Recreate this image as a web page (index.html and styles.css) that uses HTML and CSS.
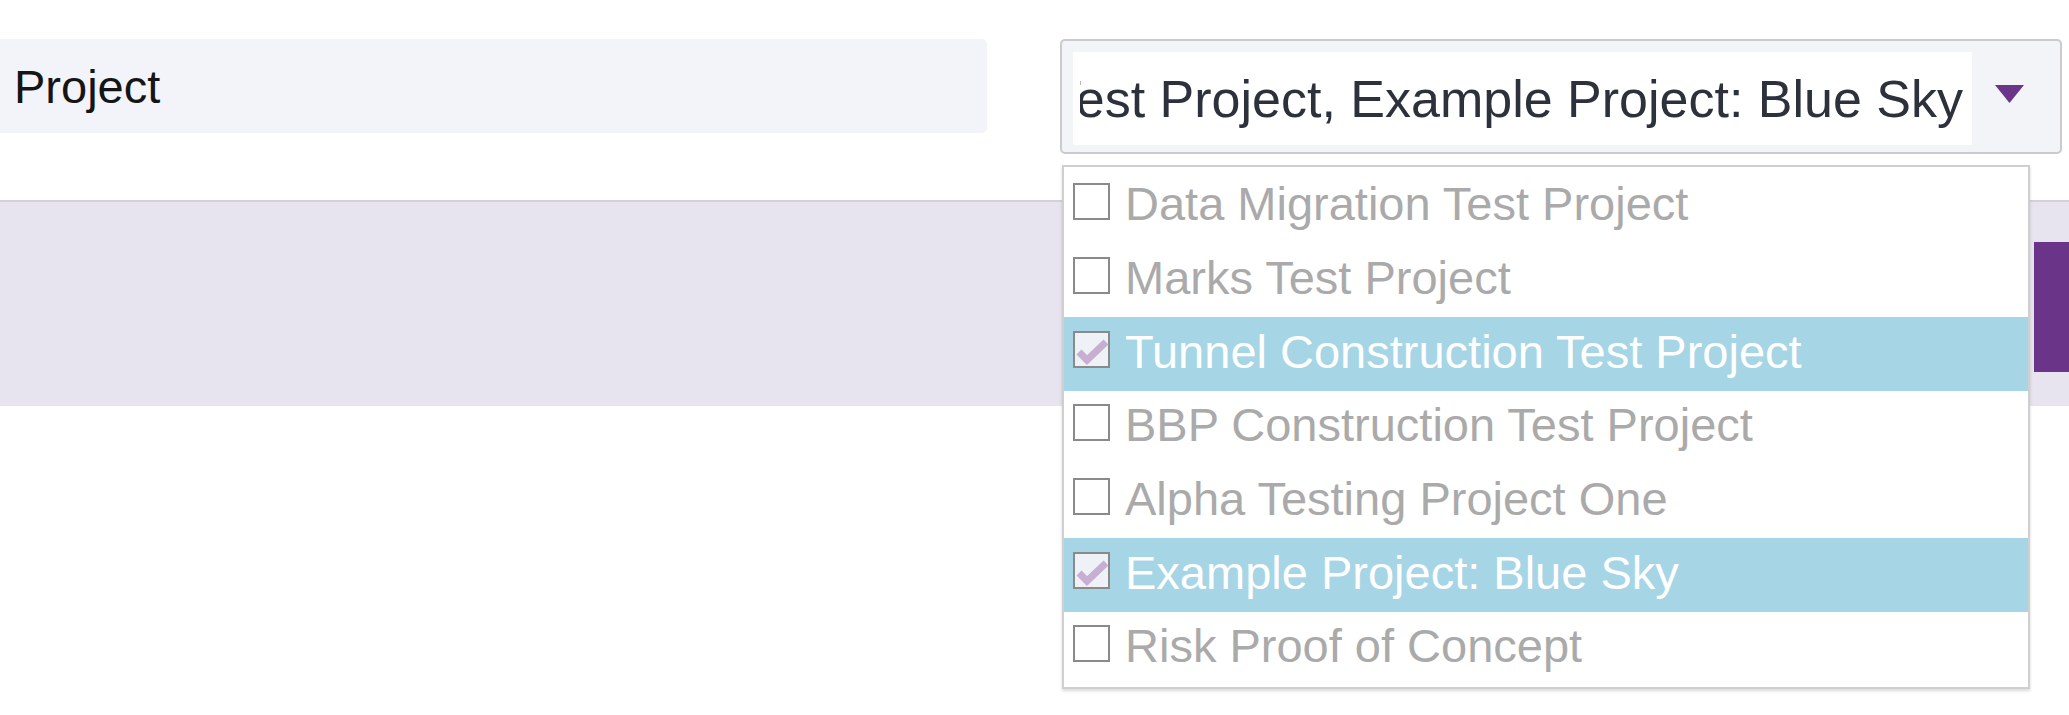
FILE: index.html
```html
<!DOCTYPE html>
<html>
<head>
<meta charset="utf-8">
<link rel="stylesheet" href="styles.css">
</head>
<body>

<div class="filter-row">
  <div class="field-label">Project</div>

  <div class="multiselect">
    <div class="multiselect-box">
      <div class="multiselect-value">
        <div class="multiselect-text"><span>Tunnel Construction Test Project, Example Project: Blue Sky</span></div>
      </div>
      <div class="multiselect-caret">
        <svg width="29" height="18" viewBox="0 0 29 18"><polygon points="0,0 29,0 14.5,18"/></svg>
      </div>
    </div>

    <ul class="multiselect-menu">
      <li><span class="check"></span>Data Migration Test Project</li>
      <li><span class="check"></span>Marks Test Project</li>
      <li class="selected"><span class="check"><svg viewBox="0 0 33 33"><polyline points="4,19 12,27 31,9"/></svg></span>Tunnel Construction Test Project</li>
      <li><span class="check"></span>BBP Construction Test Project</li>
      <li><span class="check"></span>Alpha Testing Project One</li>
      <li class="selected"><span class="check"><svg viewBox="0 0 33 33"><polyline points="4,19 12,27 31,9"/></svg></span>Example Project: Blue Sky</li>
      <li><span class="check"></span>Risk Proof of Concept</li>
    </ul>
  </div>
</div>

<div class="action-band">
  <button class="btn-apply" title="Apply"></button>
</div>

</body>
</html>
```

FILE: styles.css
```css
html, body { background: #fff; }
body { margin: 0; min-height: 715px; font-family: "Liberation Sans", Arial, sans-serif; }

/* label + multiselect row */
.filter-row { display: flex; align-items: flex-start; padding-top: 39px; }
.field-label { box-sizing: border-box; width: 987px; height: 94px; padding-left: 14px; display: flex; align-items: center; background: #f3f4f9; border-radius: 0 5px 5px 0; font-size: 47px; color: #151515; }

.multiselect { position: relative; margin-left: 73px; width: 1002px; }
.multiselect-box { box-sizing: border-box; height: 115px; display: flex; padding: 11px 0 7px 11px; background: #f3f4f8; border: 2px solid #cbcbcf; border-radius: 5px; }
.multiselect-value { box-sizing: border-box; width: 899px; padding: 0 9px 0 7px; display: flex; background: #fff; }
.multiselect-text { flex: 1; display: flex; justify-content: flex-end; align-items: center; overflow: hidden; white-space: nowrap; font-size: 52px; color: #2c313c; }
.multiselect-caret { flex: 1; display: flex; align-items: center; justify-content: center; padding: 0 14px 9px 0; }
.multiselect-caret svg { fill: #6b3589; }

/* dropdown list */
.multiselect-menu { position: absolute; z-index: 2; top: 126px; left: 2px; box-sizing: border-box; width: 968px; margin: 0; padding: 3px 0 1px; list-style: none; background: #fff; border: 2px solid #cfcfcf; box-shadow: 0 2px 3px rgba(0,0,0,.15); }
.multiselect-menu li { box-sizing: border-box; height: 73.67px; padding: 0 0 6px 9px; display: flex; align-items: center; white-space: nowrap; font-size: 47px; color: #aaa; }
.multiselect-menu li.selected { background: #a6d5e5; color: #fff; }

.check { box-sizing: border-box; width: 37px; height: 37px; margin: 0 15px 4px 0; flex: none; border: 2px solid #8a8a8a; background: #fff; }
.selected .check { background: #eef1f5; }
.check svg { display: block; width: 33px; height: 33px; overflow: visible; fill: none; stroke: #c7aed2; stroke-width: 7; }

/* lower band with action button */
.action-band { box-sizing: border-box; height: 206px; margin-top: 46px; padding-top: 40px; display: flex; justify-content: flex-end; align-items: flex-start; background: #e8e4ef; border-top: 2px solid #d4d2d9; }
.btn-apply { width: 35px; height: 130px; padding: 0; border: none; background: #6a3488; }
```
